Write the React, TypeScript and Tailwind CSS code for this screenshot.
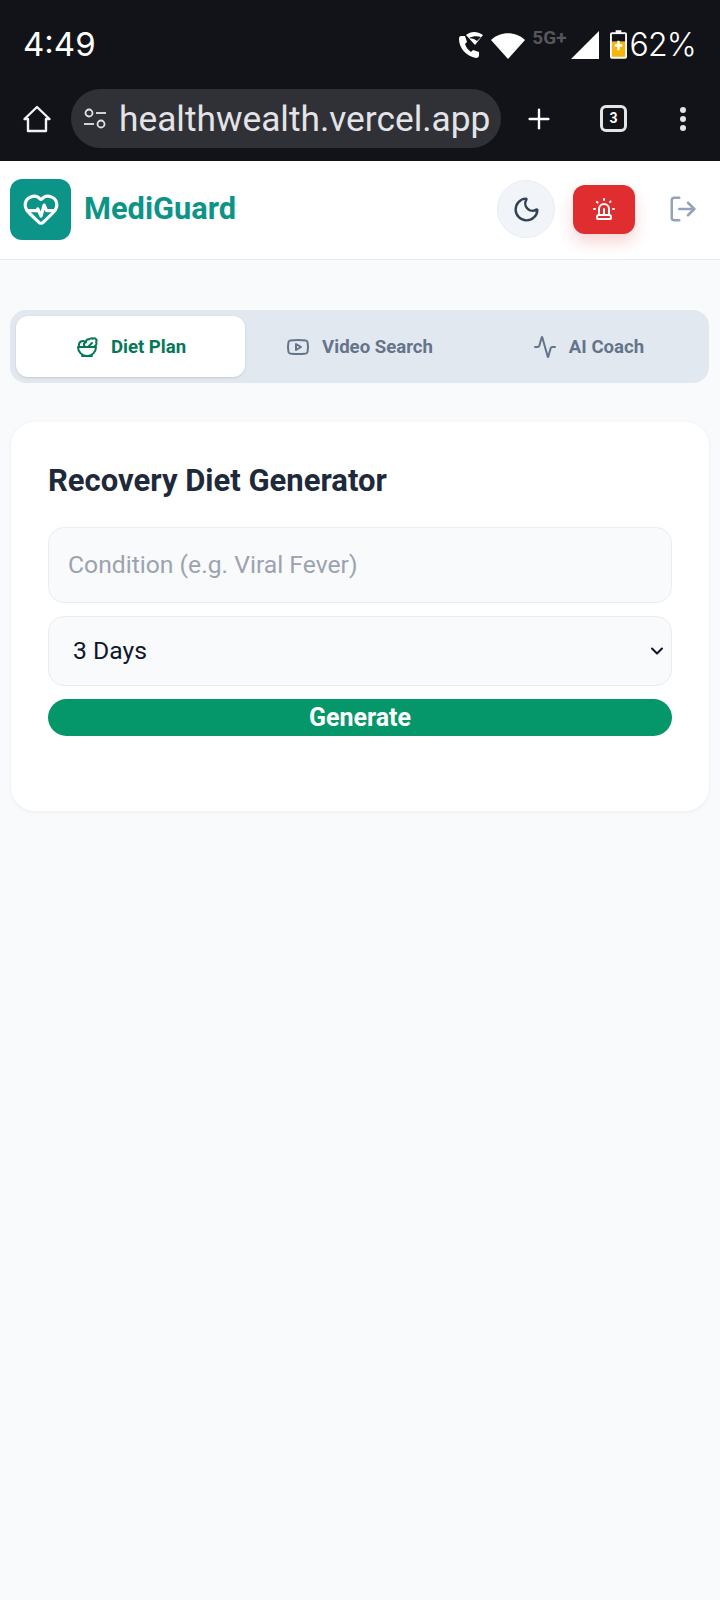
import React from 'react';
import { Activity, ChevronDown, HeartPulse, LogOut, Moon, Plus, Salad, Siren, Youtube } from 'lucide-react';

// Android status bar glyphs
const CallIcon = () => (
  <svg width="26" height="28" viewBox="0 0 26 28" fill="none" className="text-white">
    <path d="M2 8 C2 17 9 25 19 27 Q22 27 22 24 L22 21 L16 19 L14 21 C11 19 9 16 8 13 L10 11 L8 5 L4 5 Q2 5 2 8 Z" fill="currentColor" />
    <path d="M9 4 C14 0 20 0 26 4 L18 14 Z" fill="currentColor" />
    <path d="M12 7 C16 5 20 5 24 6 L20 10 L17 8 Z" fill="#121318" />
  </svg>
);

const WifiIcon = () => (
  <svg width="34" height="28" viewBox="0 0 34 28">
    <path d="M0 9 C9 0 25 0 34 9 L17 28 Z" fill="white" />
  </svg>
);

const SignalIcon = () => (
  <svg width="28" height="28" viewBox="0 0 28 28">
    <path d="M0 28 L28 0 L28 28 Z" fill="white" />
  </svg>
);

const BatteryIcon = () => (
  <svg width="17" height="29" viewBox="0 0 18 30">
    <path d="M6 0 H12 V2 H16 Q18 2 18 4 V28 Q18 30 16 30 H2 Q0 30 0 28 V4 Q0 2 2 2 H6 Z" fill="white" />
    <rect x="2" y="4" width="14" height="8" fill="#121318" />
    <rect x="2" y="12" width="14" height="16" fill="#f5b50a" />
    <path d="M9 11 V21 M5 16 H13" stroke="white" strokeWidth="2.500" />
  </svg>
);

const SiteSettingsIcon = () => (
  <svg width="24" height="24" viewBox="0 0 24 24" fill="none" stroke="#e3e3e8" strokeWidth="1.800">
    <circle cx="6" cy="6" r="3.500" />
    <path d="M13 6 H23" />
    <path d="M1 17 H11" />
    <circle cx="18" cy="17" r="3.500" />
  </svg>
);

const HomeIcon = () => (
  <svg width="28" height="28" viewBox="0 0 28 28" fill="none" stroke="#f2f2f5" strokeWidth="2.400" strokeLinejoin="round">
    <path d="M1.500 14 L14 2 L26.500 14 H23 V26 H5 V14 Z" />
  </svg>
);

const tabs = [
  { label: 'Diet Plan', Icon: Salad, active: true },
  { label: 'Video Search', Icon: Youtube, active: false },
  { label: 'AI Coach', Icon: Activity, active: false },
];

export default function App() {
  return (
    <div className="min-h-[1600px] bg-[#f8fafc] font-['Roboto',sans-serif]">
      {/* Phone + browser chrome */}
      <div className="h-[161px] bg-[#121318] text-white">
        <div className="flex h-[89px] items-center justify-between pl-[23px] pr-[24px]">
          <span className="font-['Inter',sans-serif] text-[33px]">4:49</span>
          <div className="flex items-center">
            <CallIcon />
            <div className="ml-2"><WifiIcon /></div>
            <span className="mb-3 ml-[7px] text-[19px] font-bold text-[#55565b]">5G+</span>
            <div className="ml-1"><SignalIcon /></div>
            <div className="ml-[11px]"><BatteryIcon /></div>
            <span className="ml-[3px] font-['Inter',sans-serif] text-[32px] font-light tracking-tight">62%</span>
          </div>
        </div>
        <div className="flex items-center pl-[23px]">
          <HomeIcon />
          <div className="ml-[20px] flex h-[59px] w-[430px] items-center rounded-full bg-[#303136] pl-[12px]">
            <SiteSettingsIcon />
            <span className="ml-[12px] pt-[2px] text-[35.300px] leading-none text-[#e3e3e8]">healthwealth.vercel.app</span>
          </div>
          <Plus size={32} strokeWidth={1.800} className="ml-[22px]" />
          <div className="ml-[45px] flex h-[27px] w-[27px] items-center justify-center rounded-md border-[3px] border-[#e3e3e8] text-[14px] font-bold">3</div>
          <div className="ml-[53px] flex flex-col gap-[3px]">
            <span className="h-[6px] w-[6px] rounded-full bg-[#e3e3e8]" />
            <span className="h-[6px] w-[6px] rounded-full bg-[#e3e3e8]" />
            <span className="h-[6px] w-[6px] rounded-full bg-[#e3e3e8]" />
          </div>
        </div>
      </div>

      {/* App header */}
      <header className="flex h-[99px] items-center border-b border-[#e8ebef] bg-white pb-[2px] pl-[10px] pr-[22px]">
        <div className="flex h-[61px] w-[61px] items-center justify-center rounded-xl bg-[#0d9488] text-white">
          <HeartPulse size={38} strokeWidth={2} />
        </div>
        <span className="ml-[13px] text-[30.800px] font-bold text-[#0d9488]">MediGuard</span>
        <div className="ml-auto flex h-[58px] w-[58px] items-center justify-center rounded-full border border-[#e8edf3] bg-[#f1f5f9] text-[#334155]">
          <Moon size={29} strokeWidth={2} />
        </div>
        <div className="ml-[18px] flex h-[49px] w-[62px] items-center justify-center rounded-xl bg-[#e02d2f] text-white shadow-[0_8px_16px_rgba(220,38,38,0.2)]">
          <Siren size={24} strokeWidth={2} />
        </div>
        <LogOut size={30} strokeWidth={2} className="ml-[33px] text-[#94a3b8]" />
      </header>

      <main className="px-[10px]">
        {/* Tabs */}
        <div className="mt-[50px] flex h-[73px] w-[699px] rounded-2xl bg-[#e2e8f0] p-[6px]">
          {tabs.map(({ label, Icon, active }) => (
            <div
              key={label}
              className={active
                ? 'flex h-[61px] w-[229px] items-center justify-center gap-3 rounded-xl bg-white text-[18.600px] font-bold text-[#047857] shadow'
                : 'flex h-[61px] flex-1 items-center justify-center gap-3 text-[18.600px] font-bold text-[#64748b]'}
            >
              <Icon size={24} strokeWidth={2} />
              <span className="pt-[3px]">{label}</span>
            </div>
          ))}
        </div>

        {/* Diet generator card */}
        <section className="mt-[39px] ml-[1px] h-[389px] w-[698px] rounded-3xl bg-white px-[37px] pt-[38px] shadow-[0_1px_4px_rgba(15,23,42,0.06)]">
          <h2 className="text-[31px] leading-[42px] font-bold text-[#1e293b]">Recovery Diet Generator</h2>
          <input
            readOnly
            placeholder="Condition (e.g. Viral Fever)"
            className="mt-[25px] block h-[76px] w-[624px] rounded-2xl border border-[#e9edf2] bg-[#f8fafc] pb-[2px] pl-[19px] text-[24.700px] text-[#0f172a] placeholder:text-[#9ca3af]"
          />
          <div className="relative mt-[13px] w-[624px]">
            <select className="block h-[70px] w-full appearance-none rounded-2xl border border-[#e9edf2] bg-[#f8fafc] px-[24px] text-[24.700px] text-[#0f172a]">
              <option>3 Days</option>
            </select>
            <ChevronDown size={20} strokeWidth={2.500} className="pointer-events-none absolute top-[25px] right-[5px] text-[#0f172a]" />
          </div>
          <button className="mt-[13px] block h-[37px] w-[624px] rounded-full bg-[#059669] text-[25px] leading-none font-bold text-white">
            Generate
          </button>
        </section>
      </main>
    </div>
  );
}
